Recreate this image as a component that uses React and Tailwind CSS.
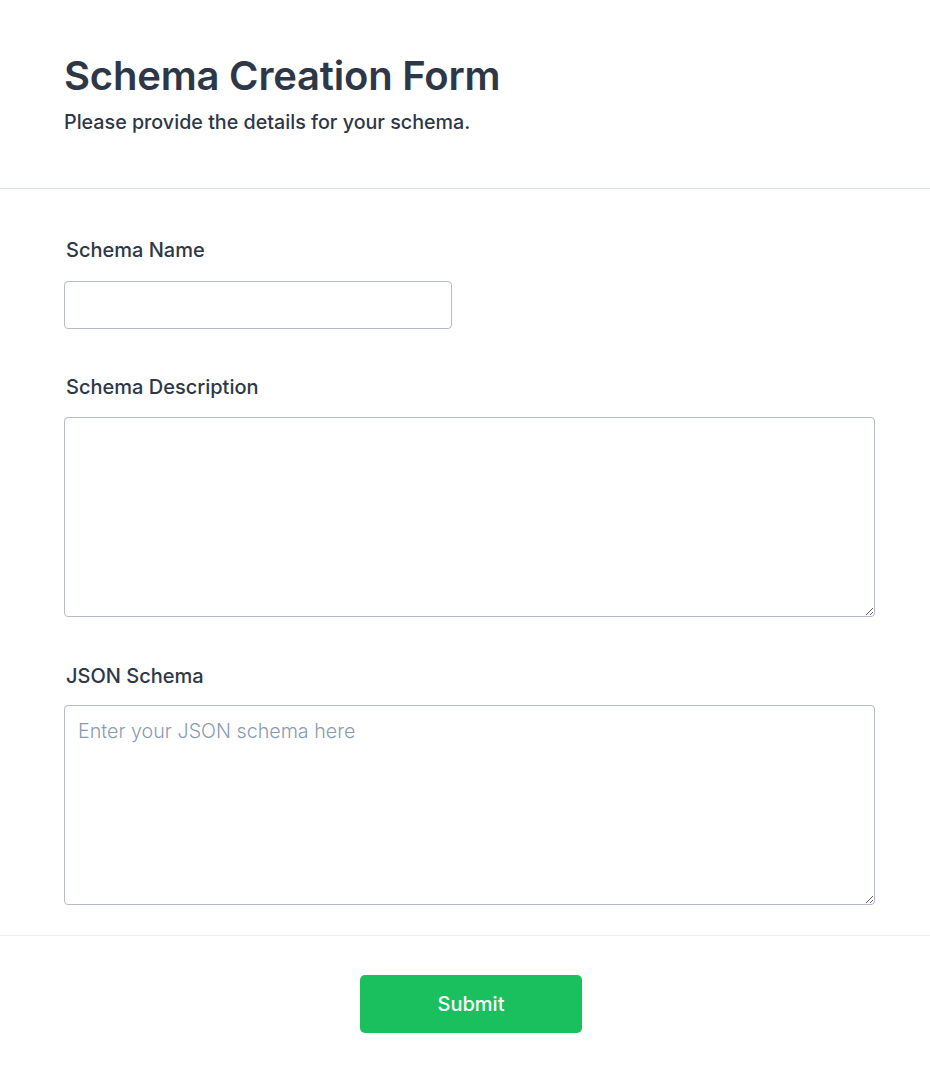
export default function App() {
  return (
    <div className="min-h-[1083px] w-full bg-white text-[#2d3748]" style={{ fontFamily: 'Inter, "Noto Sans", sans-serif' }}>
      <div className="pl-16 pr-[55px] pt-[52px] pb-[52px] border-b border-[#dbdfe7]">
        <h1 className="text-[40px] leading-[48px] font-semibold tracking-[-0.2px]">Schema Creation Form</h1>
        <p className="mt-2 text-[19.7px] leading-7 font-medium">Please provide the details for your schema.</p>
      </div>
      <form className="pl-16 pr-[55px] pt-[49px] pb-[30px] border-b border-[#eceef3]" onSubmit={(e) => e.preventDefault()}>
        <label className="block pl-[2px] text-xl leading-6 font-medium">Schema Name</label>
        <input type="text" className="mt-[19px] block w-[388px] h-12 rounded border border-[#b7bac8] bg-white px-[14px] text-xl outline-none" />
        <label className="mt-[46px] block pl-[2px] text-xl leading-6 font-medium">Schema Description</label>
        <textarea className="mt-[18px] block w-full h-[200px] rounded border border-[#b7bac8] bg-white px-[14px] py-3 text-xl outline-none" />
        <label className="mt-[47px] block pl-[2px] text-xl leading-6 font-medium">JSON Schema</label>
        <textarea placeholder="Enter your JSON schema here" className="mt-[17px] block w-full h-[200px] rounded border border-[#b7bac8] bg-white px-[13px] py-[11px] text-[19.7px] leading-7 font-light placeholder:text-[#8a9bb2] outline-none" />
      </form>
      <div className="flex justify-center pl-3 pt-[39px] pb-[50px]">
        <button type="button" className="w-[222px] h-[58px] rounded-[5px] bg-[#1abf5e] text-white text-xl font-medium">Submit</button>
      </div>
    </div>
  );
}
